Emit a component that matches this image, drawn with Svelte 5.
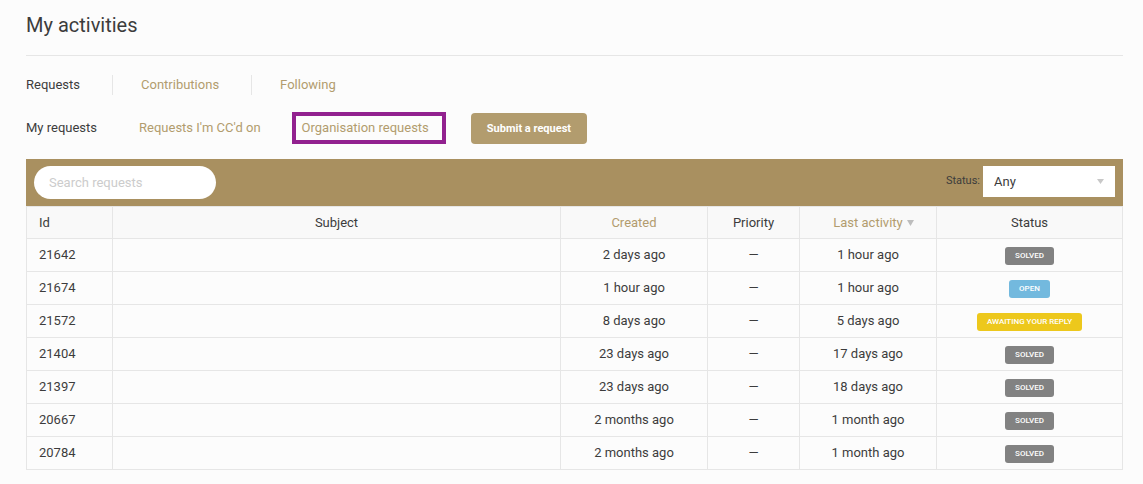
<script>
  const sections = ['Requests', 'Contributions', 'Following'];

  const requests = [
    { id: 21642, created: '2 days ago', activity: '1 hour ago', status: 'solved', label: 'Solved' },
    { id: 21674, created: '1 hour ago', activity: '1 hour ago', status: 'open', label: 'Open' },
    { id: 21572, created: '8 days ago', activity: '5 days ago', status: 'awaiting', label: 'Awaiting your reply' },
    { id: 21404, created: '23 days ago', activity: '17 days ago', status: 'solved', label: 'Solved' },
    { id: 21397, created: '23 days ago', activity: '18 days ago', status: 'solved', label: 'Solved' },
    { id: 20667, created: '2 months ago', activity: '1 month ago', status: 'solved', label: 'Solved' },
    { id: 20784, created: '2 months ago', activity: '1 month ago', status: 'solved', label: 'Solved' }
  ];
</script>

<main>
  <header>
    <h1>My activities</h1>
  </header>

  <nav class="sections">
    {#each sections as section, i}
      <a href="#{section.toLowerCase()}" class:current={i === 0}>{section}</a>
    {/each}
  </nav>

  <div class="subnav">
    <nav class="filters">
      <a href="#mine" class="current">My requests</a>
      <a href="#cc">Requests I'm CC'd on</a>
      <a href="#organisation" class="highlighted">Organisation requests</a>
    </nav>
    <button type="button">Submit a request</button>
  </div>

  <form class="toolbar">
    <input type="search" placeholder="Search requests" aria-label="Search requests" />
    <div class="status-filter">
      <label for="status">Status:</label>
      <div class="select">
        <select id="status">
          <option>Any</option>
          <option>Open</option>
          <option>Awaiting your reply</option>
          <option>Solved</option>
        </select>
        <svg width="7" height="5" viewBox="0 0 7 5" aria-hidden="true"><path d="M0 0H7L3.5 5Z" /></svg>
      </div>
    </div>
  </form>

  <table>
    <colgroup>
      <col class="id" />
      <col />
      <col class="created" />
      <col class="priority" />
      <col class="activity" />
      <col class="status" />
    </colgroup>
    <thead>
      <tr>
        <th>Id</th>
        <th>Subject</th>
        <th><a href="#created">Created</a></th>
        <th>Priority</th>
        <th>
          <a href="#activity" class="sorted">Last activity<svg width="7" height="6" viewBox="0 0 7 6" aria-hidden="true"><path d="M0 0H7L3.5 6Z" /></svg></a>
        </th>
        <th>Status</th>
      </tr>
    </thead>
    <tbody>
      {#each requests as request}
        <tr>
          <td>{request.id}</td>
          <td></td>
          <td>{request.created}</td>
          <td>—</td>
          <td>{request.activity}</td>
          <td><span class="badge {request.status}">{request.label}</span></td>
        </tr>
      {/each}
    </tbody>
  </table>
</main>

<style>
  :global(body) {
    background: #fcfcfc;
  }

  main {
    padding: 10px 20px 14px 26px;
    font: 13px/20px Roboto, Arial, sans-serif;
    color: #3c3c3c;
  }

  * {
    box-sizing: border-box;
  }

  a {
    color: #b29c6e;
    text-decoration: none;
  }

  a.current {
    color: #3c3c3c;
  }

  header {
    padding-bottom: 15px;
    border-bottom: 1px solid #e6e6e6;
  }

  h1 {
    margin: 0;
    font-size: 20px;
    font-weight: 400;
    line-height: 30px;
  }

  .sections {
    display: flex;
    margin-top: 19px;
  }

  .sections a {
    padding: 0 32px 0 28px;
    border-right: 1px solid #e6e6e6;
  }

  .sections a:first-child {
    padding-left: 0;
  }

  .sections a:last-child {
    border-right: 0;
  }

  .subnav {
    display: flex;
    align-items: center;
    gap: 25px;
    margin: 17px 0 15px;
  }

  .filters {
    display: flex;
    align-items: baseline;
  }

  .filters a {
    margin-right: 42px;
  }

  .filters a.highlighted {
    margin: 0 0 0 -11px;
    padding: 3px 13px 3px 6px;
    border: 4px solid #92218f;
    line-height: 18px;
  }

  button {
    height: 31px;
    padding: 0 16px;
    border: 0;
    border-radius: 4px;
    background: #b29c6e;
    color: #fff;
    font: 700 11px/31px Roboto, Arial, sans-serif;
  }

  .toolbar {
    display: flex;
    justify-content: space-between;
    align-items: flex-start;
    padding: 7px 8px;
    background: #a99060;
  }

  input {
    width: 182px;
    height: 33px;
    padding: 0 15px;
    border: 0;
    border-radius: 17px;
    background: #fff;
    font: inherit;
    color: inherit;
    appearance: none;
  }

  input::placeholder {
    color: #cccccc;
    opacity: 1;
  }

  .status-filter {
    display: flex;
    align-items: center;
    gap: 3px;
  }

  label {
    padding-bottom: 2px;
    font-size: 11px;
  }

  .select {
    position: relative;
  }

  select {
    display: block;
    width: 132px;
    height: 31px;
    padding: 0 24px 0 11px;
    border: 0;
    border-radius: 0;
    background: #fff;
    font: inherit;
    color: inherit;
    appearance: none;
  }

  .select svg {
    position: absolute;
    top: 13px;
    right: 11px;
    fill: #c8c8c8;
    pointer-events: none;
  }

  table {
    width: 100%;
    table-layout: fixed;
    border-collapse: separate;
    border-spacing: 0;
    border: solid #e6e6e6;
    border-width: 1px 0 0 1px;
  }

  col.id {
    width: 86px;
  }

  col.created {
    width: 147px;
  }

  col.priority {
    width: 92px;
  }

  col.activity {
    width: 137px;
  }

  col.status {
    width: 186px;
  }

  th,
  td {
    height: 33px;
    padding: 0 12px;
    border: solid #e6e6e6;
    border-width: 0 1px 1px 0;
    font-weight: 400;
    text-align: center;
    vertical-align: middle;
  }

  th {
    height: 32px;
    background: #f9f9f9;
  }

  th:first-child,
  td:first-child {
    text-align: left;
  }

  .sorted svg {
    margin: 0 -11px 1px 4px;
    fill: #bdbdbd;
  }

  .badge {
    display: inline-block;
    padding: 0 10px;
    border-radius: 3px;
    color: #fff;
    font-size: 8px;
    font-weight: 500;
    line-height: 18px;
    text-transform: uppercase;
    vertical-align: middle;
  }

  .solved {
    background: #828282;
  }

  .open {
    background: #73b9de;
  }

  .awaiting {
    background: #edc81c;
  }
</style>
